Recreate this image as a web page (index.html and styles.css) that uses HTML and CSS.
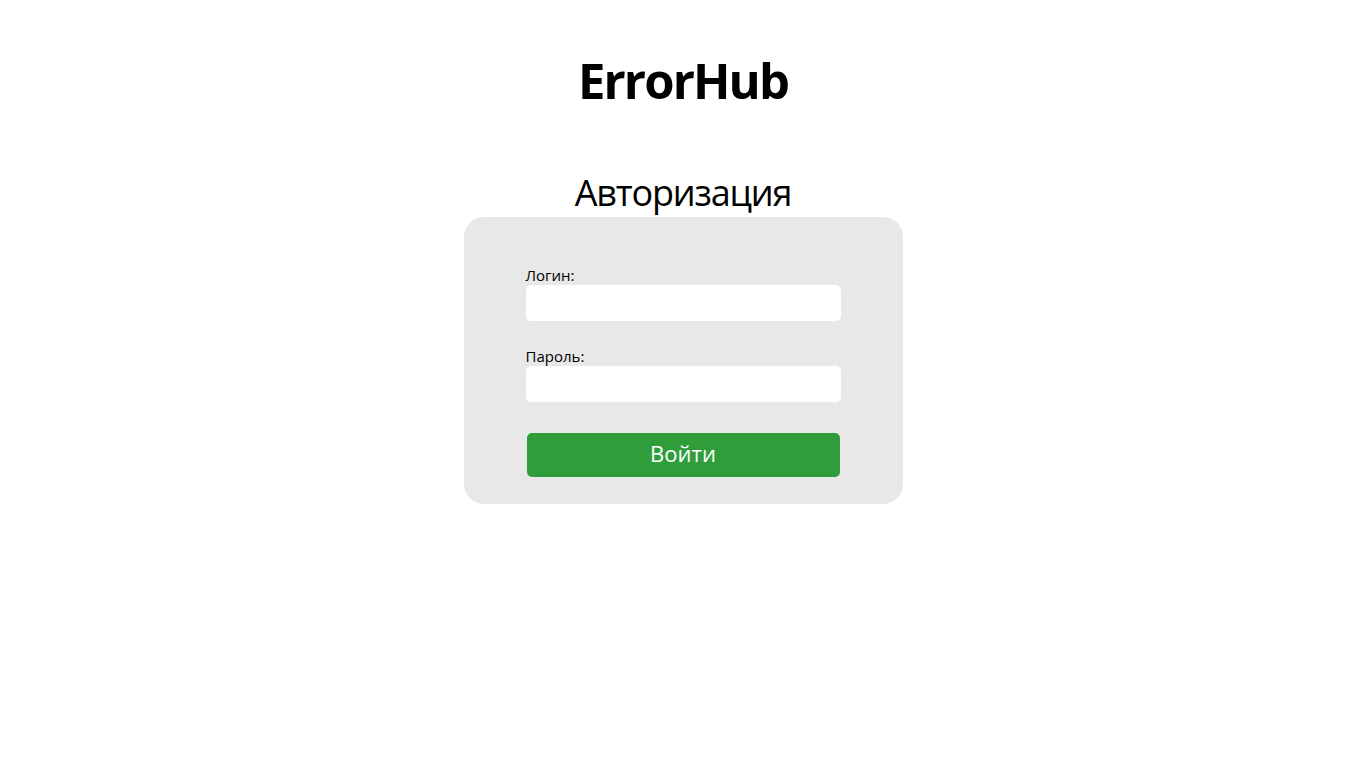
FILE: index.html
```html
<!DOCTYPE html>
<html lang="ru">
<head>
<meta charset="utf-8">
<title>ErrorHub</title>
<link rel="stylesheet" href="styles.css">
</head>
<body>
<main class="page">
  <h1 class="logo">ErrorHub</h1>
  <h2 class="heading">Авторизация</h2>
  <form class="card">
    <label class="field">
      <span class="label">Логин:</span>
      <input class="input" type="text">
    </label>
    <label class="field">
      <span class="label">Пароль:</span>
      <input class="input" type="password">
    </label>
    <button class="btn" type="button">Войти</button>
  </form>
</main>
</body>
</html>
```

FILE: styles.css
```css
* { box-sizing: border-box; }
html, body { margin: 0; padding: 0; background: #fff; }
body { font-family: "Open Sans", "Noto Sans", sans-serif; color: #000; }
.page {
  display: flex;
  flex-direction: column;
  align-items: center;
}
.logo {
  margin: 48px 0 0;
  font-size: 49px;
  font-weight: 700;
  line-height: 64px;
  letter-spacing: -1.9px;
}
.heading {
  margin: 60px 0 3px;
  font-size: 36px;
  font-weight: 400;
  line-height: 42px;
  letter-spacing: -1.2px;
}
.card {
  width: 439px;
  height: 287px;
  background: #e8e8e8;
  border-radius: 20px;
  padding: 44px 62px 0;
  display: flex;
  flex-direction: column;
}
.field { display: flex; flex-direction: column; }
.field + .field { margin-top: 21px; }
.label { font-size: 15px; line-height: 20px; padding-top: 4px; }
.input {
  width: 315px;
  height: 36px;
  border: none;
  border-radius: 5px;
  background: #fff;
  outline: none;
}
.btn {
  margin: 31px 0 0 1px;
  width: 313px;
  height: 44px;
  border: none;
  border-radius: 5px;
  background: #2e9d3a;
  color: #fff;
  font-family: inherit;
  font-size: 22px;
  line-height: 36px;
  padding: 0 0 4px;
}
```
